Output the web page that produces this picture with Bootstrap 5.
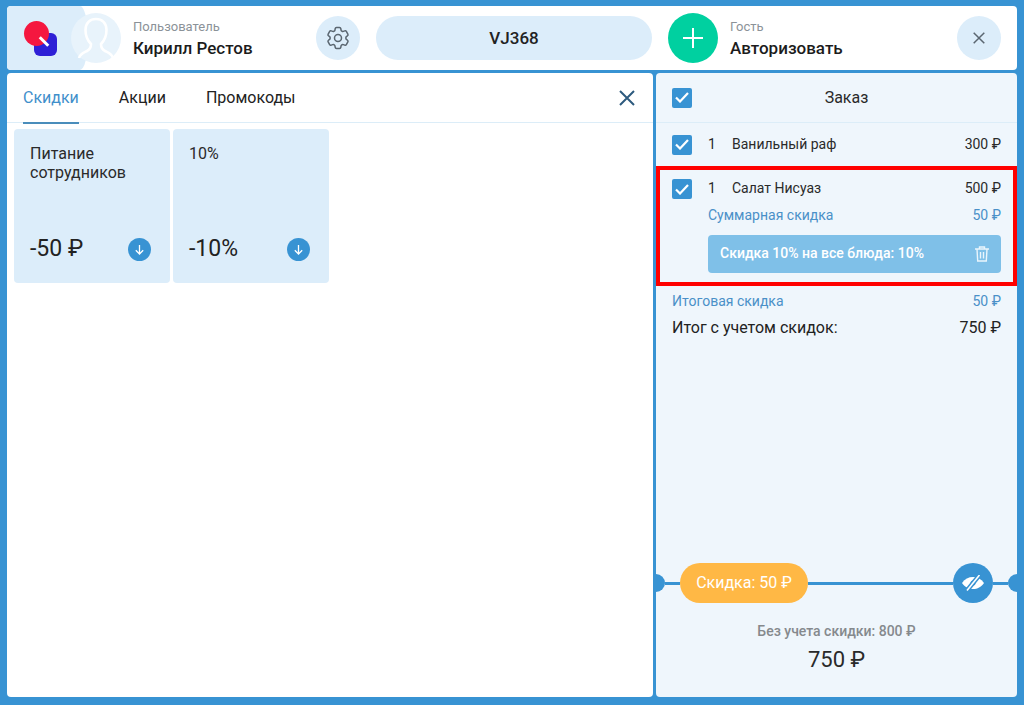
<!DOCTYPE html>
<html lang="ru">
<head>
<meta charset="utf-8">
<title>Заказ</title>
<link href="https://cdn.jsdelivr.net/npm/bootstrap@5.3.0/dist/css/bootstrap.min.css" rel="stylesheet">
<style>
html,body{height:705px;overflow:hidden}
body{background:#3893d3;font-family:Roboto,"Liberation Sans",sans-serif;color:#222;padding:6px 7px 8px}
.shell{height:691px;gap:3px}
.topbar{height:64px;background:#fff;border-radius:4px;overflow:hidden;position:relative;flex:none}
.logo-bg{position:absolute;left:0;top:0;bottom:0;width:81px;background:#dcedfa;border-top-right-radius:8px 32px;border-bottom-right-radius:8px 32px}
.logo-mark{position:relative;width:36px;height:36px;margin-left:17px;flex:none}
.logo-sq{position:absolute;left:10px;top:13px;width:23px;height:23px;background:#2f20d6;border-radius:6px}
.logo-dot{position:absolute;left:0;top:1px;width:25px;height:25px;background:#f5173f;border-radius:50%}
.logo-tick{position:absolute;left:14px;top:20px;width:12px;height:3px;background:#fff;transform:rotate(45deg)}
.avatar{position:relative;width:50px;height:50px;border-radius:50%;background:#e8f3fb;margin-left:11px;flex:none}
.who{margin-left:12px;width:183px;flex:none}
.who-label{font-size:13px;line-height:16px;color:#8b9298}
.who-name{font-size:17px;line-height:20px;font-weight:500;color:#1c1c1c;margin-top:3px}
.round-btn{width:44px;height:44px;border-radius:50%;background:#dcedfa;flex:none}
.code-pill{width:276px;height:44px;border-radius:22px;background:#dcedfa;font-size:17px;font-weight:500;margin-left:16px;margin-right:16px;flex:none;padding-top:1px}
.add-btn{width:50px;height:50px;border-radius:50%;background:#00d0a0;flex:none}
.guest{margin-left:12px;width:227px;flex:none}
.panels{flex:1 1 auto;min-height:0;gap:3px}
.panel-left{width:646px;background:#fff;border-radius:4px;flex:none}
.panel-right{width:361px;background:#eff6fc;border-radius:4px;flex:none;overflow:hidden}
.tabbar{height:50px;border-bottom:1px solid #dcedf8;padding:0 18px 0 16px;flex:none}
.tab-item{font-size:16px;height:50px;line-height:50px;color:#222;margin-right:40px;position:relative}
.tab-item.on{color:#3f8fcb}
.tab-item.on::after{content:"";position:absolute;left:0;right:0;bottom:-1px;height:2px;background:#4a8dbb}
.cards{padding:6px 7px;gap:3px}
.promo{width:156px;height:154px;background:#dcedfa;border-radius:4px;padding:15px 16px 20px}
.promo-title{font-size:16px;line-height:19px;color:#2a2a2a}
.promo-val{font-size:23px;line-height:28px;color:#222}
.dl-btn{width:23px;height:23px;border-radius:50%;background:#3893d3;margin-right:3px}
.checkbox{width:20px;height:20px;background:#3893d3;border-radius:2px;flex:none}
.order-head{height:50px;border-bottom:1px solid #dcedf8;padding:0 16px;position:relative;flex:none;font-size:16px;color:#2a2a2a}
.order-head .title{flex:1;text-align:center}
.line{font-size:14px;line-height:18px;color:#2a2a2a;height:43px;padding:0 16px}
.line .txt{margin-top:-2px}
.qty{width:24px;margin-left:16px;flex:none}
.marked{border:4px solid #f00;height:120px;padding:9px 12px 0 12px}
.marked .line{padding:0;height:20px}
.sum{font-size:14px;line-height:18px;color:#4a90c8}
.sum-item{margin:7px 0 0 36px}
.disc-bar{background:#7fc0e8;border-radius:4px;height:38px;margin-left:36px;margin-top:11px;padding:0 12px;color:#fff;font-size:14px;font-weight:500}
.disc-bar span{margin-top:-2px}
.tot{padding:6px 16px 0}
.grand{font-size:16px;line-height:20px;color:#222;margin-top:8px}
.spacer{flex:1 1 auto}
.track{height:40px;flex:none}
.seg{height:3px;background:#3893d3}
.seg-short{width:15px;flex:none}
.stub{width:9px;height:18px;background:#3893d3;border-radius:0 9px 9px 0;flex:none}
.stub.end{border-radius:9px 0 0 9px}
.disc-pill{width:128px;height:40px;border-radius:20px;background:#ffb845;color:#fff;font-size:16px;flex:none}
.eye-btn{width:40px;height:40px;border-radius:50%;background:#3893d3;flex:none}
.base{font-size:14px;font-weight:500;color:#85898d;line-height:16px;margin-top:20px;text-align:center}
.final{font-size:22px;font-weight:400;line-height:26px;color:#2a2a2a;margin-top:8px;margin-bottom:24px;text-align:center}
</style>
</head>
<body>
<div class="shell d-flex flex-column">
  <header class="topbar d-flex align-items-center">
    <div class="logo-bg"></div>
    <div class="logo-mark"><div class="logo-sq"></div><div class="logo-dot"></div><div class="logo-tick"></div></div>
    <div class="avatar">
      <svg width="50" height="50" viewBox="0 0 50 50" fill="none" stroke="#fff" stroke-width="2.6"><path d="M8 45c1-4 4-5 8-7 3-1.500 4-3 4-7-3-3-5.500-8-5.500-14 0-7 4.500-11 10.500-11s10.500 4 10.500 11c0 6-2.500 11-5.500 14 0 4 1 5.500 4 7 4 2 7 3 8 7"/></svg>
    </div>
    <div class="who">
      <div class="who-label">Пользователь</div>
      <div class="who-name">Кирилл Рестов</div>
    </div>
    <div class="round-btn d-flex align-items-center justify-content-center">
      <svg width="28" height="28" viewBox="0 0 24 24" fill="none" stroke="#5a6670" stroke-width="1.300"><path d="M9.594 3.94c.09-.542.56-.94 1.11-.94h2.593c.55 0 1.02.398 1.11.94l.213 1.281c.063.374.313.686.645.87.074.04.147.083.22.127.325.196.72.257 1.075.124l1.217-.456a1.125 1.125 0 0 1 1.37.49l1.296 2.247a1.125 1.125 0 0 1-.26 1.431l-1.003.827c-.293.241-.438.613-.43.992a7.723 7.723 0 0 1 0 .255c-.008.378.137.75.43.991l1.004.827c.424.35.534.955.26 1.43l-1.298 2.247a1.125 1.125 0 0 1-1.369.491l-1.217-.456c-.355-.133-.75-.072-1.076.124a6.47 6.47 0 0 1-.22.128c-.331.183-.581.495-.644.869l-.213 1.281c-.09.543-.56.94-1.11.94h-2.594c-.55 0-1.019-.398-1.11-.94l-.213-1.281c-.062-.374-.312-.686-.644-.87a6.52 6.52 0 0 1-.22-.127c-.325-.196-.72-.257-1.076-.124l-1.217.456a1.125 1.125 0 0 1-1.369-.49l-1.297-2.247a1.125 1.125 0 0 1 .26-1.431l1.004-.827c.292-.24.437-.613.43-.991a6.932 6.932 0 0 1 0-.255c.007-.38-.138-.751-.43-.992l-1.004-.827a1.125 1.125 0 0 1-.26-1.43l1.297-2.247a1.125 1.125 0 0 1 1.37-.491l1.216.456c.356.133.751.072 1.076-.124.072-.044.146-.086.22-.128.332-.183.582-.495.644-.869l.214-1.28Z"/><circle cx="12" cy="12" r="3"/></svg>
    </div>
    <div class="code-pill d-flex align-items-center justify-content-center">VJ368</div>
    <div class="add-btn d-flex align-items-center justify-content-center">
      <svg width="22" height="22" viewBox="0 0 22 22" stroke="#fff" stroke-width="2"><path d="M11 1v20M1 11h20"/></svg>
    </div>
    <div class="guest">
      <div class="who-label">Гость</div>
      <div class="who-name">Авторизовать</div>
    </div>
    <div class="round-btn d-flex align-items-center justify-content-center">
      <svg width="12" height="12" viewBox="0 0 12 12" stroke="#5a6670" stroke-width="1.500"><path d="M.7.7l10.600 10.600M11.300.7L.7 11.300"/></svg>
    </div>
  </header>
  <div class="panels d-flex">
    <section class="panel-left d-flex flex-column">
      <div class="tabbar d-flex align-items-center">
        <div class="tab-item on">Скидки</div>
        <div class="tab-item">Акции</div>
        <div class="tab-item">Промокоды</div>
        <svg class="ms-auto" width="16" height="16" viewBox="0 0 16 16" stroke="#2d5a7e" stroke-width="2"><path d="M1 1l14 14M15 1L1 15"/></svg>
      </div>
      <div class="cards d-flex">
        <div class="promo d-flex flex-column justify-content-between">
          <div class="promo-title">Питание<br>сотрудников</div>
          <div class="d-flex align-items-center justify-content-between">
            <div class="promo-val">-50 ₽</div>
            <div class="dl-btn d-flex align-items-center justify-content-center"><svg width="11" height="11" viewBox="0 0 11 11" fill="none" stroke="#fff" stroke-width="1.300"><path d="M5.500 1v9M1.800 6.300l3.700 3.700 3.700-3.700"/></svg></div>
          </div>
        </div>
        <div class="promo d-flex flex-column justify-content-between">
          <div class="promo-title">10%</div>
          <div class="d-flex align-items-center justify-content-between">
            <div class="promo-val">-10%</div>
            <div class="dl-btn d-flex align-items-center justify-content-center"><svg width="11" height="11" viewBox="0 0 11 11" fill="none" stroke="#fff" stroke-width="1.300"><path d="M5.500 1v9M1.800 6.300l3.700 3.700 3.700-3.700"/></svg></div>
          </div>
        </div>
      </div>
    </section>
    <aside class="panel-right d-flex flex-column">
      <div class="order-head d-flex align-items-center">
        <div class="checkbox d-flex align-items-center justify-content-center"><svg width="14" height="11" viewBox="0 0 14 11" fill="none" stroke="#fff" stroke-width="2.200"><path d="M1 5.500l4 4L13 1"/></svg></div>
        <div class="title">Заказ</div>
      </div>
      <div class="line d-flex align-items-center">
        <div class="checkbox d-flex align-items-center justify-content-center"><svg width="14" height="11" viewBox="0 0 14 11" fill="none" stroke="#fff" stroke-width="2.200"><path d="M1 5.500l4 4L13 1"/></svg></div>
        <div class="qty txt">1</div><div class="txt">Ванильный раф</div><div class="ms-auto txt">300 ₽</div>
      </div>
      <div class="marked">
        <div class="line d-flex align-items-center">
          <div class="checkbox d-flex align-items-center justify-content-center"><svg width="14" height="11" viewBox="0 0 14 11" fill="none" stroke="#fff" stroke-width="2.200"><path d="M1 5.500l4 4L13 1"/></svg></div>
          <div class="qty txt">1</div><div class="txt">Салат Нисуаз</div><div class="ms-auto txt">500 ₽</div>
        </div>
        <div class="sum sum-item d-flex justify-content-between"><span>Суммарная скидка</span><span>50 ₽</span></div>
        <div class="disc-bar d-flex align-items-center justify-content-between">
          <span>Скидка 10% на все блюда: 10%</span>
          <svg width="14" height="16" viewBox="0 0 14 16" fill="none" stroke="#eaf5fc" stroke-width="1.400"><path d="M0 3h14M4.500 3V1h5v2M2 3l.7 12h8.600L12 3M5.500 6v6.500M8.500 6v6.500"/></svg>
        </div>
      </div>
      <div class="tot">
        <div class="sum d-flex justify-content-between"><span>Итоговая скидка</span><span>50 ₽</span></div>
        <div class="grand d-flex justify-content-between"><span>Итог с учетом скидок:</span><span>750 ₽</span></div>
      </div>
      <div class="spacer"></div>
      <div class="track d-flex align-items-center">
        <div class="stub"></div>
        <div class="seg seg-short"></div>
        <div class="disc-pill d-flex align-items-center justify-content-center">Скидка: 50 ₽</div>
        <div class="seg flex-grow-1"></div>
        <div class="eye-btn d-flex align-items-center justify-content-center">
          <svg width="22" height="16" viewBox="0 0 22 16" fill="none"><path fill="#fff" d="M0 8c3-4.200 6.500-6 11-6s8 1.800 11 6c-3 4.200-6.500 6-11 6S3 12.200 0 8z"/><circle cx="11" cy="8" r="2.500" fill="#3893d3"/><path stroke="#3893d3" stroke-width="4.500" d="M17.500 0L5 15.500"/><path stroke="#fff" stroke-width="1.600" d="M17.500 0L5 15.500"/></svg>
        </div>
        <div class="seg seg-short"></div>
        <div class="stub end"></div>
      </div>
      <div class="base">Без учета скидки: 800 ₽</div>
      <div class="final">750 ₽</div>
    </aside>
  </div>
</div>
<script src="https://cdn.jsdelivr.net/npm/bootstrap@5.3.0/dist/js/bootstrap.bundle.min.js"></script>
</body>
</html>
